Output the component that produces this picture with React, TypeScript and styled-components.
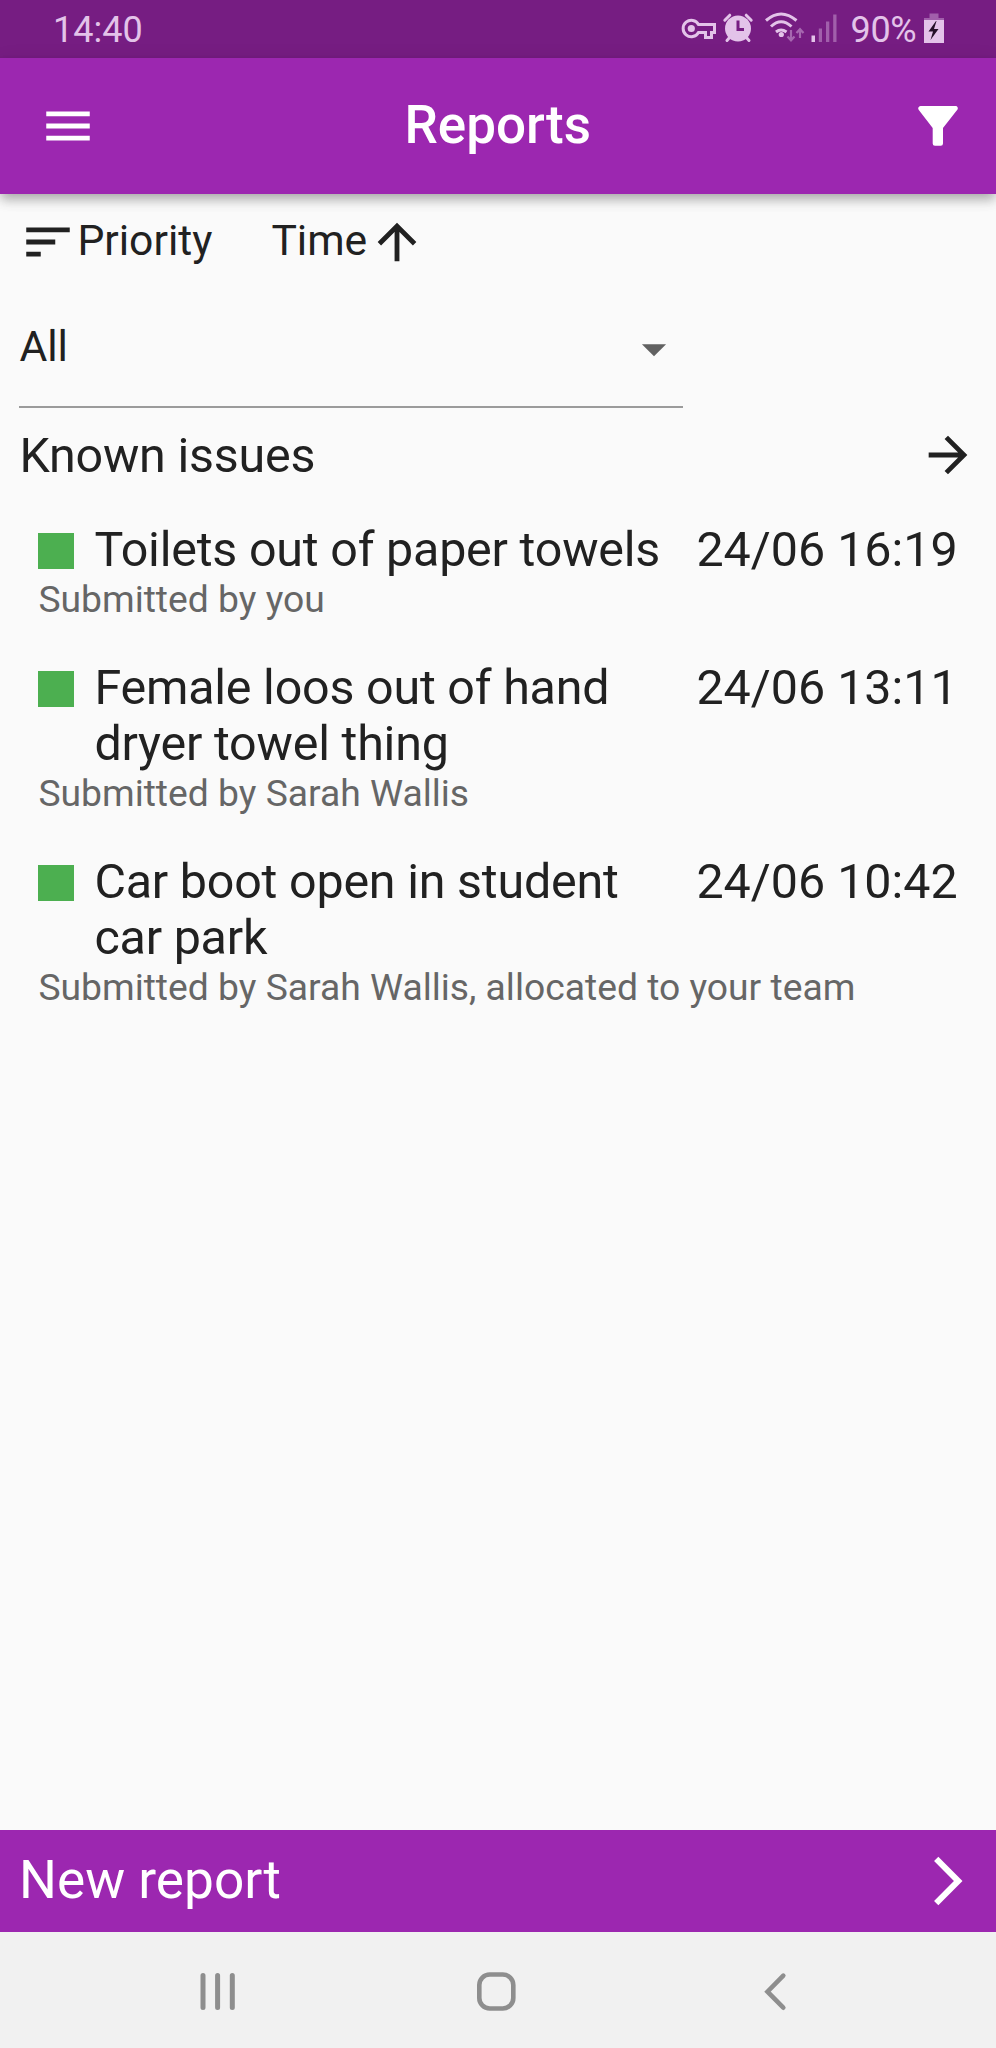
import React from "react";
import styled, { createGlobalStyle } from "styled-components";

const GlobalStyle = createGlobalStyle`
  *, *::before, *::after { box-sizing: border-box; }
  body { margin: 0; background: #fafafa; }
  button { font: inherit; color: inherit; background: none; border: 0; padding: 0; margin: 0; text-align: left; }
  svg { display: block; flex: none; }
`;

const Screen = styled.div`
  width: 996px;
  height: 2048px;
  display: flex;
  flex-direction: column;
  overflow: hidden;
  background: #fafafa;
  color: #212121;
  font-family: Roboto, "Liberation Sans", sans-serif;
`;

const StatusBar = styled.div`
  flex: none;
  height: 58px;
  display: flex;
  justify-content: space-between;
  padding: 0 51px 0 53px;
  background: #761d82;
  color: #e3c3e9;
`;

const StatusText = styled.span`
  font-size: 36px;
  line-height: 60px;
  white-space: nowrap;
`;

const StatusIcons = styled.div`
  display: flex;
`;

const Percent = styled(StatusText)`
  width: 75px;
  padding-left: 10.5px;
  letter-spacing: -0.3px;
`;

const AppBar = styled.header`
  flex: none;
  position: relative;
  height: 136px;
  display: grid;
  grid-template-columns: 58px 1fr 58px;
  align-items: center;
  padding: 0 29px 0 38.5px;
  background: #9c27b0;
  color: #fff;
  box-shadow: 0 5px 10px -2px rgba(0, 0, 0, 0.2), 0 8px 11px rgba(0, 0, 0, 0.12),
    0 2px 18px rgba(0, 0, 0, 0.08);
`;

const Title = styled.h1`
  margin: 0;
  padding: 0 10px 2px 0;
  text-align: center;
  font-size: 53px;
  line-height: 62px;
  font-weight: 500;
`;

const Content = styled.main`
  flex: 1;
  min-height: 0;
  padding: 19px 19.4px 0;
`;

const SortRow = styled.div`
  display: flex;
  gap: 59px;
  height: 58px;
`;

const SortButton = styled.button`
  display: flex;
  align-items: center;
  font-size: 42.65px;
  line-height: 50px;
`;

const SortLabel = styled.span<{ $end?: boolean }>`
  padding-bottom: 4px;
  padding-right: ${(p) => (p.$end ? 1 : 0)}px;
`;

const Select = styled.button`
  width: 664px;
  height: 118px;
  margin-top: 19px;
  padding-top: 2px;
  display: flex;
  justify-content: space-between;
  align-items: center;
  border-bottom: 2px solid #9b9b9b;
  font-size: 42.65px;
  line-height: 50px;
`;

const SelectValue = styled.span`
  padding-bottom: 6px;
`;

const SectionHeader = styled.div`
  display: flex;
  justify-content: space-between;
  align-items: center;
  height: 58px;
  margin-top: 18px;
`;

const SectionTitle = styled.h2`
  margin: 0;
  font-size: 48.4px;
  line-height: 57px;
  font-weight: 400;
  letter-spacing: -0.2px;
`;

const Reports = styled.ul`
  list-style: none;
  margin: 19px 0 0;
  padding: 0;
`;

const Report = styled.li`
  padding: 19px 19px 20.2px;
`;

const ReportHead = styled.div`
  display: grid;
  grid-template-columns: 36px 582px 1fr;
  column-gap: 20px;
  font-size: 48.4px;
  line-height: 56px;
`;

const Level = styled.span`
  width: 36px;
  height: 36px;
  margin-top: 11px;
  background: #4caf50;
`;

const ReportTitle = styled.span`
  white-space: pre-line;
  letter-spacing: -0.2px;
`;

const ReportTime = styled.span`
  white-space: nowrap;
`;

const Submitted = styled.p`
  margin: -1px 0 0;
  font-size: 37.25px;
  line-height: 44px;
  color: #666;
  white-space: nowrap;
`;

const NewReport = styled.button`
  flex: none;
  height: 102px;
  display: flex;
  align-items: center;
  justify-content: space-between;
  padding: 0 19px;
  background: #9c27b0;
  color: #fff;
  font-size: 53.2px;
  line-height: 62px;
`;

const NewReportLabel = styled.span`
  padding-bottom: 2px;
`;

const NavBar = styled.nav`
  flex: none;
  height: 116px;
  display: flex;
  justify-content: center;
  align-items: center;
  gap: 218px;
  background: #f1f1f1;
  padding: 4px 4px 0 0;
`;

const Glyph = ({ d }: { d: string }) => (
  <svg width="58" height="58" viewBox="0 0 24 24" fill="currentColor">
    <path d={d} />
  </svg>
);

const reports = [
  { title: "Toilets out of paper towels", time: "24/06 16:19", by: "Submitted by you" },
  { title: "Female loos out of hand\ndryer towel thing", time: "24/06 13:11", by: "Submitted by Sarah Wallis" },
  {
    title: "Car boot open in student\ncar park",
    time: "24/06 10:42",
    by: "Submitted by Sarah Wallis, allocated to your team",
  },
];

export default function App() {
  return (
    <Screen>
      <GlobalStyle />
      <StatusBar>
        <StatusText>14:40</StatusText>
        <StatusIcons>
          <svg width="40" height="58" viewBox="679 0 40 58" fill="none" stroke="currentColor" strokeWidth="3">
            <path d="M697.5 24.5a8.2 8.2 0 1 0 0 8h7v5h6v-5h3v-8z" />
            <circle cx="690.3" cy="28.5" r="3.6" fill="currentColor" stroke="none" />
          </svg>
          <svg width="40" height="58" viewBox="720 0 40 58">
            <circle cx="738" cy="28.5" r="13" fill="currentColor" />
            <g fill="none" stroke="currentColor" strokeWidth="3" strokeLinecap="round">
              <path d="M724.8 20.2l5-5M751.2 20.2l-5-5M730 37l-3 3.5M746 37l3 3.5" />
            </g>
            <path d="M738 20.5v9h6" fill="none" stroke="#761d82" strokeWidth="3" />
          </svg>
          <svg width="48" height="58" viewBox="760 0 48 58" fill="none" stroke="currentColor" strokeWidth="3">
            <path d="M766 20.5q15-13 30.5 0M771 26.5q10-9.5 20.5 0M776 32q5-4 10.5 0" />
            <circle cx="781.3" cy="34.5" r="2.6" fill="currentColor" stroke="none" />
            <g strokeWidth="2.2" opacity="0.45">
              <path d="M791 30v10M787.5 36.5l3.5 3.8 3.5-3.8M800 38V29M796.5 33l3.5-3.8 3.5 3.8" />
            </g>
          </svg>
          <svg width="32" height="58" viewBox="808 0 32 58" fill="currentColor">
            <path d="M811.5 35.5h3.5v6.5h-3.5z" />
            <path opacity="0.4" d="M818.8 28.5h3.2V42h-3.2zM826 21.5h3.3V42h-3.3zM833.2 14.5h3.3V42h-3.3z" />
          </svg>
          <Percent>90%</Percent>
          <svg width="30" height="58" viewBox="915 0 30 58">
            <path d="M929.5 13.5h9V18h-9zM924 18h20v2h-20z" fill="currentColor" opacity="0.4" />
            <path d="M924 20h20v23h-20z" fill="currentColor" />
            <path d="M936 21l-7.5 10.5h4.5l-2.5 8.5 8-11h-4.5l2.5-8z" fill="#241028" />
          </svg>
        </StatusIcons>
      </StatusBar>

      <AppBar>
        <Glyph d="M3 18h18v-2H3v2zm0-5h18v-2H3v2zm0-7v2h18V6H3z" />
        <Title>Reports</Title>
        <svg width="58" height="58" viewBox="909 97 58 58" fill="currentColor">
          <path d="M920.5 106h35a2.3 2.3 0 0 1 1.6 4L943 128v15.5a2.3 2.3 0 0 1-2.3 2.3h-5.7a2.3 2.3 0 0 1-2.3-2.3V128L918.8 110a2.4 2.4 0 0 1 1.7-4z" />
        </svg>
      </AppBar>

      <Content>
        <SortRow>
          <SortButton>
            <Glyph d="M3 18h6v-2H3v2zM3 6v2h18V6H3zm0 7h12v-2H3v2z" />
            <SortLabel>Priority</SortLabel>
          </SortButton>
          <SortButton>
            <SortLabel $end>Time</SortLabel>
            <Glyph d="M4 12l1.41 1.41L11 7.83V20h2V7.83l5.58 5.59L20 12l-8-8-8 8z" />
          </SortButton>
        </SortRow>
        <Select>
          <SelectValue>All</SelectValue>
          <svg width="58" height="58" viewBox="0 0 24 24" fill="#616161">
            <path d="M7 10l5 5 5-5z" />
          </svg>
        </Select>
        <SectionHeader>
          <SectionTitle>Known issues</SectionTitle>
          <Glyph d="M12 4l-1.41 1.41L16.17 11H4v2h12.17l-5.58 5.59L12 20l8-8z" />
        </SectionHeader>
        <Reports>
          {reports.map((r) => (
            <Report key={r.time}>
              <ReportHead>
                <Level />
                <ReportTitle>{r.title}</ReportTitle>
                <ReportTime>{r.time}</ReportTime>
              </ReportHead>
              <Submitted>{r.by}</Submitted>
            </Report>
          ))}
        </Reports>
      </Content>

      <NewReport>
        <NewReportLabel>New report</NewReportLabel>
        <Glyph d="M6.23 20.23L8 22l10-10L8 2 6.23 3.77 14.46 12z" />
      </NewReport>
      <NavBar>
        <svg width="60" height="60" viewBox="188 1962 60 60" stroke="#8e8e8e" strokeWidth="5" strokeLinecap="round">
          <path d="M203 1975.5v32M217.6 1975.5v32M232.3 1975.5v32" />
        </svg>
        <svg width="60" height="60" viewBox="466 1962 60 60" fill="none" stroke="#8e8e8e" strokeWidth="4.6">
          <rect x="479.3" y="1974.5" width="34" height="34" rx="10.5" />
        </svg>
        <svg width="60" height="60" viewBox="744 1962 60 60" fill="none" stroke="#8e8e8e" strokeWidth="4.6" strokeLinecap="round">
          <path d="M783.3 1975.7L767.5 1991.7l15.8 16" />
        </svg>
      </NavBar>
    </Screen>
  );
}
